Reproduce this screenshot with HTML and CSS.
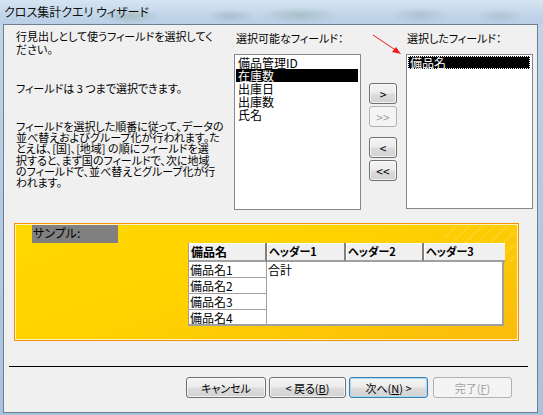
FILE: index.html
```html
<!DOCTYPE html>
<html lang="ja">
<head>
<meta charset="utf-8">
<title>クロス集計クエリ ウィザード</title>
<link rel="stylesheet" href="styles.css">
</head>
<body>
<div class="window">
  <div class="titlebar"><span class="title">クロス集計クエリ ウィザード</span></div>
  <div class="body">
    <div class="top">
      <div class="intro">
        <p class="p1">行見出しとして使うフィールドを選択してく<br>ださい。</p>
        <p class="p2">フィールドは 3 つまで選択できます。</p>
        <p class="p3">フィールドを選択した順番に従って、データの<br>並べ替えおよびグループ化が行われます。た<br>とえば、[国]、[地域] の順にフィールドを選<br>択すると、まず国のフィールドで、次に地域<br>のフィールドで、並べ替えとグループ化が行<br>われます。</p>
      </div>
      <div class="col">
        <div class="label">選択可能なフィールド：</div>
        <div class="listbox">
          <div class="item">備品管理ID</div>
          <div class="item selected">在庫数</div>
          <div class="item">出庫日</div>
          <div class="item">出庫数</div>
          <div class="item">氏名</div>
        </div>
      </div>
      <div class="movebtns">
        <div class="btn sm">&gt;</div>
        <div class="btn sm disabled">&gt;&gt;</div>
        <div class="btn sm group2">&lt;</div>
        <div class="btn sm">&lt;&lt;</div>
      </div>
      <div class="col right">
        <div class="label">選択したフィールド：</div>
        <div class="listbox">
          <div class="item selected focus">備品名</div>
        </div>
      </div>
    </div>
    <div class="sample">
      <div class="sample-label">サンプル:</div>
      <div class="grid">
        <div class="hcell">備品名</div>
        <div class="hcell">ヘッダー1</div>
        <div class="hcell">ヘッダー2</div>
        <div class="hcell last">ヘッダー3</div>
        <div class="rows">
          <div class="rcell">備品名1</div>
          <div class="rcell">備品名2</div>
          <div class="rcell">備品名3</div>
          <div class="rcell">備品名4</div>
        </div>
        <div class="values">合計</div>
      </div>
    </div>
    <div class="separator"></div>
    <div class="footer">
      <div class="btn fb w80">キャンセル</div>
      <div class="btn fb w77">&lt; 戻る(<u>B</u>)</div>
      <div class="btn fb w79 default">次へ(<u>N</u>) &gt;</div>
      <div class="btn fb w79 disabled">完了(<u>F</u>)</div>
    </div>
  </div>
  <svg class="arrow" width="40" height="30" viewBox="0 0 40 30">
    <line x1="3" y1="3" x2="27" y2="19" stroke="#f21c1c" stroke-width="1"/>
    <polygon points="31,22 22,20 26,15" fill="#f21c1c"/>
  </svg>
</div>
</body>
</html>
```
FILE: styles.css
```css
* { box-sizing: border-box; }
html, body { margin: 0; padding: 0; }
body {
  width: 543px;
  height: 415px;
  overflow: hidden;
  font-family: "Noto Sans CJK JP", "Noto Sans", sans-serif;
  font-size: 11px;
  color: #000;
  font-feature-settings: "palt";
}
.window {
  position: relative;
  width: 543px;
  height: 415px;
  background: linear-gradient(180deg, #c3d6e9 0%, #b4cce4 40%, #a9c3df 100%);
}
.titlebar {
  height: 24px;
  padding: 4px 0 0 4px;
  background:
    radial-gradient(ellipse 30px 8px at 130px 16px, rgba(120,150,120,0.35), transparent),
    radial-gradient(ellipse 40px 8px at 300px 15px, rgba(110,140,120,0.3), transparent),
    radial-gradient(ellipse 25px 7px at 230px 16px, rgba(120,140,150,0.3), transparent),
    radial-gradient(ellipse 30px 8px at 420px 15px, rgba(140,150,170,0.35), transparent),
    radial-gradient(ellipse 25px 8px at 500px 16px, rgba(150,160,170,0.35), transparent),
    linear-gradient(180deg, #d6e4f1 0%, #c2d6ea 60%, #b9cfe6 100%);
}
.title {
  font-size: 12px;
  line-height: 16px;
  color: #111;
  white-space: nowrap;
}
.body {
  margin-left: 3px;
  width: 535px;
  height: 389px;
  border: 1px solid #6f7f8f;
  background: #f0f0f0;
}
.top {
  display: flex;
  padding: 5px 0 0 12px;
  height: 185px;
}
.intro {
  width: 218px;
  white-space: nowrap;
}
.intro p { margin: 0; }
.p1 { line-height: 13px; }
.p2 { margin-top: 26px !important; line-height: 12px; }
.p3 { margin-top: 27px !important; line-height: 11.2px; }
.col { width: 127px; }
.label {
  margin-top: 2px;
  line-height: 12px;
  height: 12px;
  margin-bottom: 10px;
  padding-left: 2px;
  white-space: nowrap;
}
.right .label { margin-left: -1px; }
.right .listbox { margin-top: 1px; height: 155px; }
.listbox {
  height: 156px;
  border: 1px solid #828790;
  background: #fff;
  padding: 1px 2px 1px 1px;
}
.item {
  font-size: 12px;
  line-height: 13px;
  height: 13px;
  padding-left: 2px;
  white-space: nowrap;
}
.item.selected { background: #000; color: #fff; }
.item.focus { outline: 1px dotted #fff; outline-offset: -1px; }
.movebtns {
  width: 28px;
  margin: 53px 9px 0 8px;
  display: flex;
  flex-direction: column;
  gap: 2px;
}
.btn {
  display: flex;
  align-items: center;
  justify-content: center;
  height: 21px;
  border: 1px solid #707070;
  border-radius: 3px;
  background: linear-gradient(180deg, #f4f4f4 0%, #ececec 48%, #dcdcdc 52%, #d2d2d2 100%);
  box-shadow: inset 0 0 0 1px rgba(255,255,255,0.7);
  font-size: 11px;
  line-height: 12px;
  white-space: nowrap;
}
.btn.sm { font-size: 12px; font-feature-settings: normal; }
.btn.group2 { margin-top: 8px; }
.btn.disabled {
  border-color: #adb2b5;
  background: #f4f4f4;
  color: #a0a0a0;
  box-shadow: none;
}
.btn u { text-decoration: underline; text-underline-offset: 1px; }
.sample {
  margin: 13px 0 0 10px;
  width: 505px;
  height: 118px;
  border: 1px solid #f39200;
  box-shadow: inset 0 0 0 1px #fff3c4;
  padding: 1px 0 0 17px;
  background:
    repeating-linear-gradient(135deg, rgba(255,240,150,0) 0 7px, rgba(255,232,120,0.22) 7px 9px) 430px 2px / 70px 36px no-repeat,
    linear-gradient(160deg, #ffd800 0%, #ffd200 45%, #fcc307 80%, #fbbc0e 100%);
}
.sample-label {
  width: 86px;
  height: 18px;
  background: #808080;
  font-size: 12px;
  line-height: 16px;
  padding-left: 1px;
}
.grid {
  margin-left: 156px;
  width: 316px;
  height: 83px;
  display: grid;
  grid-template-columns: 78px 79px 78px 81px;
  grid-template-rows: 19px 64px;
  background: #fff;
  border-left: 1px solid #a0a0a0;
  border-right: 2px solid #a0a0a0;
  border-bottom: 2px solid #a0a0a0;
}
.hcell {
  background: #f0f0f0;
  border-right: 2px solid #808080;
  border-bottom: 2px solid #a0a0a0;
  box-shadow: inset 1px 1px 0 #fff;
  font-weight: bold;
  font-size: 11px;
  line-height: 17px;
  padding-left: 2px;
  white-space: nowrap;
}
.hcell:first-child { font-size: 12px; }
.hcell.last { border-right: none; }
.rows { display: flex; flex-direction: column; border-right: 1px solid #a0a0a0; }
.rcell {
  height: 16px;
  border-bottom: 1px solid #a0a0a0;
  font-size: 12px;
  line-height: 15px;
  padding-left: 1px;
  white-space: nowrap;
}
.rcell:last-child { border-bottom: none; }
.values {
  grid-column: 2 / 5;
  font-size: 12px;
  line-height: 15px;
  padding-left: 1px;
}
.separator {
  margin: 25px 0 0 5px;
  width: 519px;
  border-top: 1px solid #000;
}
.footer {
  display: flex;
  margin: 10px 0 0 182px;
}
.fb { height: 21px; margin-right: 3px; }
.w80 { width: 80px; }
.w77 { width: 77px; }
.w79 { width: 79px; }
.footer .default {
  border-color: #3c7fb1;
  box-shadow: inset 0 0 0 1px #a6daf5;
  margin-right: 5px;
}
.arrow {
  position: absolute;
  left: 370px;
  top: 32px;
}
```
